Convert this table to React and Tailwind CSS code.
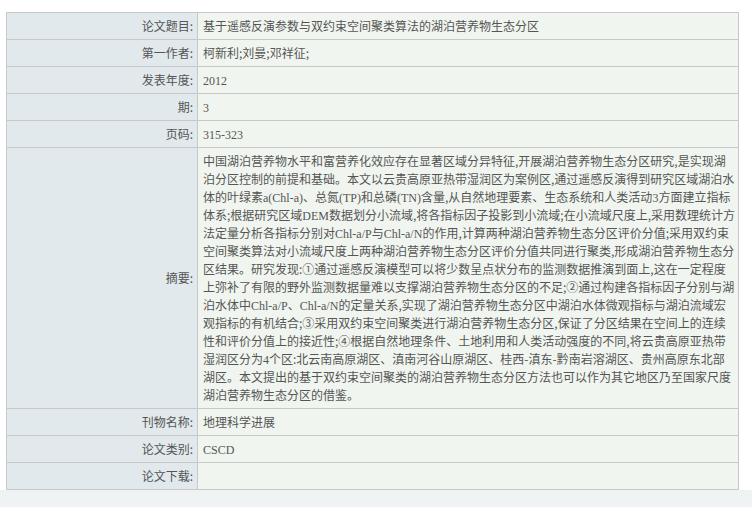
import React from "react";

const cjk = { fontFamily: '"Noto Sans CJK SC", "Liberation Sans", sans-serif' };

// Latin / digits inside the Chinese text use a serif face
const L = ({children}) => (
  <span className="font-['Liberation_Serif',serif] leading-none">{children}</span>
);

const abstractLines = [
  <>中国湖泊营养物水平和富营养化效应存在显著区域分异特征,开展湖泊营养物生态分区研究,是实现湖</>,
  <>泊分区控制的前提和基础。本文以云贵高原亚热带湿润区为案例区,通过遥感反演得到研究区域湖泊水</>,
  <>体的叶绿素<L>a(Chl-a)</L>、总氮<L>(TP)</L>和总磷<L>(TN)</L>含量,从自然地理要素、生态系统和人类活动<L>3</L>方面建立指标</>,
  <>体系;根据研究区域<L>DEM</L>数据划分小流域,将各指标因子投影到小流域;在小流域尺度上,采用数理统计方</>,
  <>法定量分析各指标分别对<L>Chl-a/P</L>与<L>Chl-a/N</L>的作用,计算两种湖泊营养物生态分区评价分值;采用双约束</>,
  <>空间聚类算法对小流域尺度上两种湖泊营养物生态分区评价分值共同进行聚类,形成湖泊营养物生态分</>,
  <>区结果。研究发现:①通过遥感反演模型可以将少数呈点状分布的监测数据推演到面上,这在一定程度</>,
  <>上弥补了有限的野外监测数据量难以支撑湖泊营养物生态分区的不足;②通过构建各指标因子分别与湖</>,
  <>泊水体中<L>Chl-a/P</L>、<L>Chl-a/N</L>的定量关系,实现了湖泊营养物生态分区中湖泊水体微观指标与湖泊流域宏</>,
  <>观指标的有机结合;③采用双约束空间聚类进行湖泊营养物生态分区,保证了分区结果在空间上的连续</>,
  <>性和评价分值上的接近性;④根据自然地理条件、土地利用和人类活动强度的不同,将云贵高原亚热带</>,
  <>湿润区分为<L>4</L>个区:北云南高原湖区、滇南河谷山原湖区、桂西-滇东-黔南岩溶湖区、贵州高原东北部</>,
  <>湖区。本文提出的基于双约束空间聚类的湖泊营养物生态分区方法也可以作为其它地区乃至国家尺度</>,
  <>湖泊营养物生态分区的借鉴。</>,
];

const Row = ({label, children, tall}) => (
  <tr>
    <td className="w-[191px] border border-[#c8c8c8] bg-[#e1e9ec] pr-[4px] text-right align-middle">
      {label}
    </td>
    <td
      className={`border border-[#c8c8c8] bg-[#f1f5f0] pl-[5px] align-middle ${
        tall ? "pt-[4px] pb-[4px]" : "h-[27px]"
      }`}
    >
      {children}
    </td>
  </tr>
);

export default function App() {
  return (
    <div className="w-[752px] min-h-[507px] bg-[#eff3f4]" style={cjk}>
      <div className="bg-white pt-[12px] pl-[6px] pr-[13px]">
        <table className="w-full border-collapse text-[12px] leading-[18px] text-[#555]">
          <tbody>
            <Row label="论文题目:">基于遥感反演参数与双约束空间聚类算法的湖泊营养物生态分区</Row>
            <Row label="第一作者:">柯新利;刘曼;邓祥征;</Row>
            <Row label="发表年度:"><L>2012</L></Row>
            <Row label="期:"><L>3</L></Row>
            <Row label="页码:"><L>315-323</L></Row>
            <Row label="摘要:" tall>
              {abstractLines.map((line, i) => (
                <div key={i} className="h-[18px] whitespace-nowrap">{line}</div>
              ))}
            </Row>
            <Row label="刊物名称:">地理科学进展</Row>
            <Row label="论文类别:"><L>CSCD</L></Row>
            <Row label="论文下载:"></Row>
          </tbody>
        </table>
      </div>
    </div>
  );
}
